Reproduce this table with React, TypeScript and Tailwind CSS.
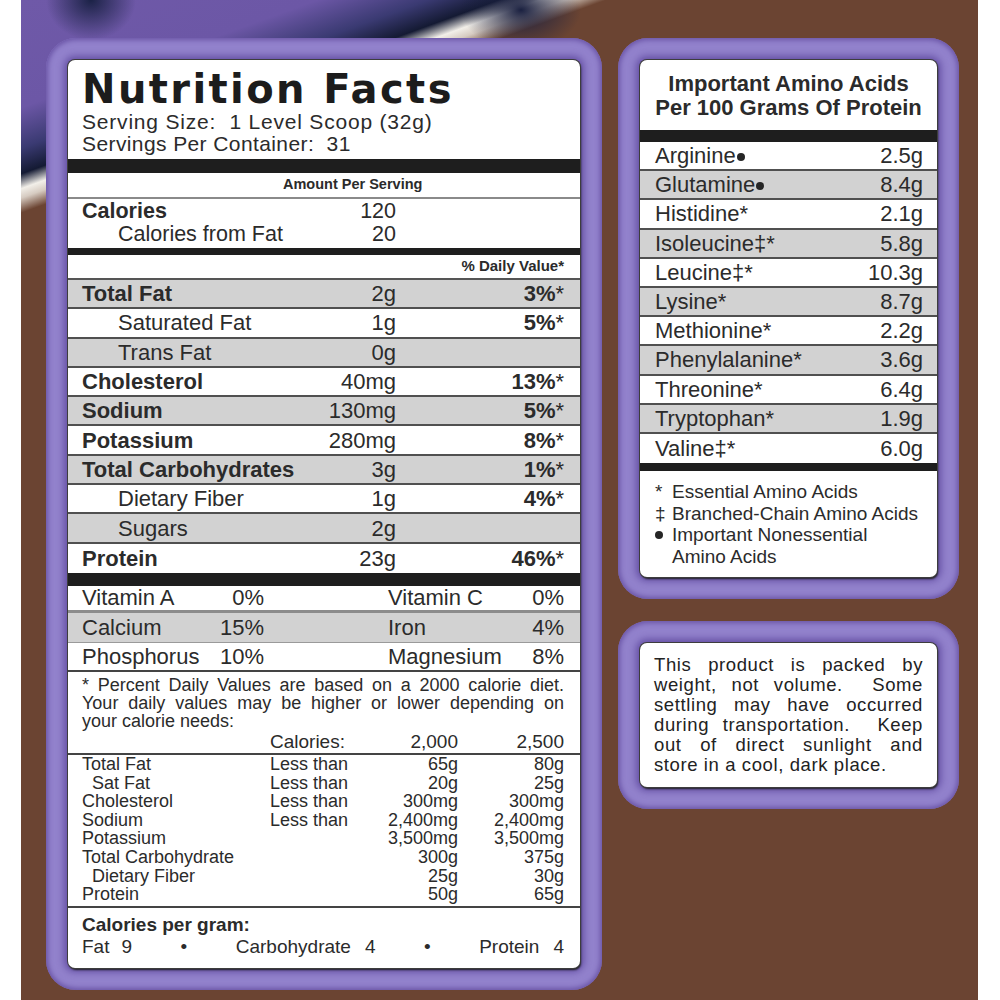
type Nutrient = { name: string; amount: string; dv?: string; sub?: boolean };

const nutrients: Nutrient[] = [
  { name: 'Total Fat', amount: '2g', dv: '3' },
  { name: 'Saturated Fat', amount: '1g', dv: '5', sub: true },
  { name: 'Trans Fat', amount: '0g', sub: true },
  { name: 'Cholesterol', amount: '40mg', dv: '13' },
  { name: 'Sodium', amount: '130mg', dv: '5' },
  { name: 'Potassium', amount: '280mg', dv: '8' },
  { name: 'Total Carbohydrates', amount: '3g', dv: '1' },
  { name: 'Dietary Fiber', amount: '1g', dv: '4', sub: true },
  { name: 'Sugars', amount: '2g', sub: true },
  { name: 'Protein', amount: '23g', dv: '46' },
];

const dailyValues = [
  ['Total Fat', 'Less than', '65g', '80g'],
  ['\u00a0\u00a0Sat Fat', 'Less than', '20g', '25g'],
  ['Cholesterol', 'Less than', '300mg', '300mg'],
  ['Sodium', 'Less than', '2,400mg', '2,400mg'],
  ['Potassium', '', '3,500mg', '3,500mg'],
  ['Total Carbohydrate', '', '300g', '375g'],
  ['\u00a0\u00a0Dietary Fiber', '', '25g', '30g'],
  ['Protein', '', '50g', '65g'],
];

type Amino = { name: string; mark: 'dot' | 'star' | 'bcaa'; grams: string };

const aminos: Amino[] = [
  { name: 'Arginine', mark: 'dot', grams: '2.5g' },
  { name: 'Glutamine', mark: 'dot', grams: '8.4g' },
  { name: 'Histidine', mark: 'star', grams: '2.1g' },
  { name: 'Isoleucine', mark: 'bcaa', grams: '5.8g' },
  { name: 'Leucine', mark: 'bcaa', grams: '10.3g' },
  { name: 'Lysine', mark: 'star', grams: '8.7g' },
  { name: 'Methionine', mark: 'star', grams: '2.2g' },
  { name: 'Phenylalanine', mark: 'star', grams: '3.6g' },
  { name: 'Threonine', mark: 'star', grams: '6.4g' },
  { name: 'Tryptophan', mark: 'star', grams: '1.9g' },
  { name: 'Valine', mark: 'bcaa', grams: '6.0g' },
];

const packedLines = [
  'This product is packed by',
  'weight, not volume.  Some',
  'settling may have occurred',
  'during transportation.  Keep',
  'out of direct sunlight and',
];

function Dot() {
  return <span className="inline-block size-[8px] rounded-full bg-[#262626] ml-[1px] align-middle" />;
}

function Frame({ children }: { children: React.ReactNode }) {
  return (
    <div className="rounded-[30px] bg-[#9282cc] p-[22px] shadow-[inset_0_0_5px_2px_#6a54a6]">
      <div className="rounded-[7px] bg-white overflow-hidden shadow-[0_0_0_1px_#3d3d3d,1px_2px_2px_#1e1e1e,0_0_7px_4px_rgba(96,74,160,0.9)]">
        {children}
      </div>
    </div>
  );
}

function NutritionLabel() {
  return (
    <div className="w-[512px] h-[908px] flex flex-col">
      {/* header */}
      <div className="h-[99px] pt-[7px] px-[14px]">
        <h1 className="font-['DejaVu_Sans',sans-serif] font-bold text-[40px] leading-[44px] tracking-[2.4px] text-[#1c1c1c]">
          Nutrition Facts
        </h1>
        <p className="text-[21px] leading-[22px] tracking-[0.8px] whitespace-pre">Serving Size:  1 Level Scoop (32g)</p>
        <p className="text-[21px] leading-[22px] tracking-[0.4px] whitespace-pre">Servings Per Container:  31</p>
      </div>
      <div className="h-[14px] bg-[#1e1e1e]" />
      <div className="h-[26px] border-b-2 border-[#8a8a8a] pl-[215px] flex items-center text-[14.5px] font-bold">
        Amount Per Serving
      </div>

      {/* calories */}
      <div className="h-[49px] pt-[1px] px-[14px] text-[21.5px] leading-[23px]">
        <div className="w-[314px] flex justify-between">
          <span className="font-bold">Calories</span>
          <span>120</span>
        </div>
        <div className="w-[314px] flex justify-between">
          <span className="pl-[36px]">Calories from Fat</span>
          <span>20</span>
        </div>
      </div>
      <div className="h-[7px] bg-[#1e1e1e]" />
      <div className="h-[25px] border-b-2 border-[#555] pr-[16px] flex items-center justify-end text-[15px] font-bold">
        % Daily Value*
      </div>

      {/* nutrient rows */}
      {nutrients.map((n, i) => (
        <div
          key={n.name}
          className={`h-[29.3px] flex items-center pl-[14px] pr-[16px] text-[22px] ${
            i % 2 === 0 ? 'bg-[#d2d2d2]' : 'bg-white'
          } ${i < nutrients.length - 1 ? 'border-b-2 border-[#505050]' : ''}`}
        >
          <div className="w-[314px] flex justify-between">
            <span className={n.sub ? 'pl-[36px]' : 'font-bold'}>{n.name}</span>
            <span>{n.amount}</span>
          </div>
          <div className="flex-1 text-right">
            {n.dv && (
              <>
                <span className="font-bold">{n.dv}%</span>
                <span>*</span>
              </>
            )}
          </div>
        </div>
      ))}
      <div className="h-[13px] bg-[#1e1e1e]" />

      {/* vitamins */}
      <div className="h-[27px] border-b-[3px] border-[#8c8c8c] flex items-center pl-[14px] pr-[16px] text-[22px]">
        <div className="w-[182px] flex justify-between"><span>Vitamin A</span><span>0%</span></div>
        <div className="ml-[124px] flex-1 flex justify-between"><span>Vitamin C</span><span>0%</span></div>
      </div>
      <div className="h-[30px] bg-[#d2d2d2] border-b border-[#9a9a9a] flex items-center pl-[14px] pr-[16px] text-[22px]">
        <div className="w-[182px] flex justify-between"><span>Calcium</span><span>15%</span></div>
        <div className="ml-[124px] flex-1 flex justify-between"><span>Iron</span><span>4%</span></div>
      </div>
      <div className="h-[29px] border-b-2 border-[#444] flex items-center pl-[14px] pr-[16px] text-[22px]">
        <div className="w-[182px] flex justify-between"><span>Phosphorus</span><span>10%</span></div>
        <div className="ml-[124px] flex-1 flex justify-between"><span>Magnesium</span><span>8%</span></div>
      </div>

      {/* footnote */}
      <div className="h-[83px] border-b-2 border-[#444] pt-[4px] pl-[14px] pr-[16px] text-[18px] leading-[18px]">
        <div className="text-justify [text-align-last:justify] whitespace-nowrap">* Percent Daily Values are based on a 2000 calorie diet.</div>
        <div className="text-justify [text-align-last:justify]">Your daily values may be higher or lower depending on</div>
        <div>your calorie needs:</div>
        <div className="mt-[2px] grid grid-cols-[188px_96px_92px_1fr] text-[19px] leading-[19px]">
          <span />
          <span>Calories:</span>
          <span className="text-right">2,000</span>
          <span className="text-right">2,500</span>
        </div>
      </div>

      {/* daily values table */}
      <div className="h-[153px] border-b-2 border-[#444] pl-[14px] pr-[16px] text-[18px] leading-[18.6px]">
        {dailyValues.map((r) => (
          <div key={r[0]} className="grid grid-cols-[188px_96px_92px_1fr] whitespace-pre">
            <span>{r[0]}</span>
            <span>{r[1]}</span>
            <span className="text-right">{r[2]}</span>
            <span className="text-right">{r[3]}</span>
          </div>
        ))}
      </div>

      {/* calories per gram */}
      <div className="flex-1 pt-[6px] pl-[14px] pr-[16px] text-[19px] leading-[22px]">
        <div className="font-bold">Calories per gram:</div>
        <div className="flex justify-between">
          <span>Fat<span className="ml-[12px]">9</span></span>
          <span>•</span>
          <span>Carbohydrate<span className="ml-[14px]">4</span></span>
          <span>•</span>
          <span>Protein<span className="ml-[14px]">4</span></span>
        </div>
      </div>
    </div>
  );
}

function AminoCard() {
  return (
    <div className="w-[297px] h-[517px] flex flex-col">
      <div className="h-[70px] pt-[12px] text-center font-bold text-[22px] leading-[24px]">
        <div>Important Amino Acids</div>
        <div>Per 100 Grams Of Protein</div>
      </div>
      <div className="h-[12px] bg-[#1e1e1e]" />
      {aminos.map((a, i) => (
        <div
          key={a.name}
          className={`h-[29.2px] flex items-center justify-between pl-[15px] pr-[14px] text-[22px] ${
            i % 2 === 1 ? 'bg-[#d2d2d2]' : 'bg-white'
          } ${i < aminos.length - 1 ? 'border-b-2 border-[#505050]' : ''}`}
        >
          <span>
            {a.name}
            {a.mark === 'dot' ? <Dot /> : a.mark === 'bcaa' ? '‡*' : '*'}
          </span>
          <span>{a.grams}</span>
        </div>
      ))}
      <div className="h-[8px] bg-[#1e1e1e]" />
      <div className="flex-1 pt-[10px] pl-[15px] pr-[12px] text-[19px] leading-[21.5px] grid grid-cols-[17px_1fr] content-start">
        <span>*</span>
        <span>Essential Amino Acids</span>
        <span>‡</span>
        <span className="whitespace-nowrap">Branched-Chain Amino Acids</span>
        <span className="flex items-center h-[21.5px]"><span className="size-[8px] rounded-full bg-[#262626]" /></span>
        <span>Important Nonessential<br />Amino Acids</span>
      </div>
    </div>
  );
}

function StorageCard() {
  return (
    <div className="w-[297px] h-[144px] pt-[12px] pl-[14px] pr-[14px] text-[18.5px] leading-[20px] tracking-[0.6px] text-[#222]">
      {packedLines.map((l) => (
        <div key={l} className="text-justify [text-align-last:justify] whitespace-pre-wrap">{l}</div>
      ))}
      <div>store in a cool, dark place.</div>
    </div>
  );
}

export default function App() {
  return (
    <div className="w-[1000px] h-[1000px] bg-white flex font-['Liberation_Sans',Arial,sans-serif] text-[#2b2b2b]">
      <div className="ml-[21px] w-[957px] h-[1000px] overflow-hidden flex items-start gap-[16px] pt-[38px] pl-[25px] bg-[radial-gradient(ellipse_45px_40px_at_70px_0px,#1b2246,transparent),radial-gradient(ellipse_60px_40px_at_500px_10px,#1a2040,transparent),linear-gradient(160deg,#6f59a8_0%,#6c57a6_8%,#3a3a72_11%,#141a33_12.9%,#f2efe9_14%,#d6cbc1_14.7%,#6b4432_15.8%,#6b4432_100%)]">
        <Frame>
          <NutritionLabel />
        </Frame>
        <div className="flex flex-col gap-[22px]">
          <Frame>
            <AminoCard />
          </Frame>
          <Frame>
            <StorageCard />
          </Frame>
        </div>
      </div>
    </div>
  );
}
